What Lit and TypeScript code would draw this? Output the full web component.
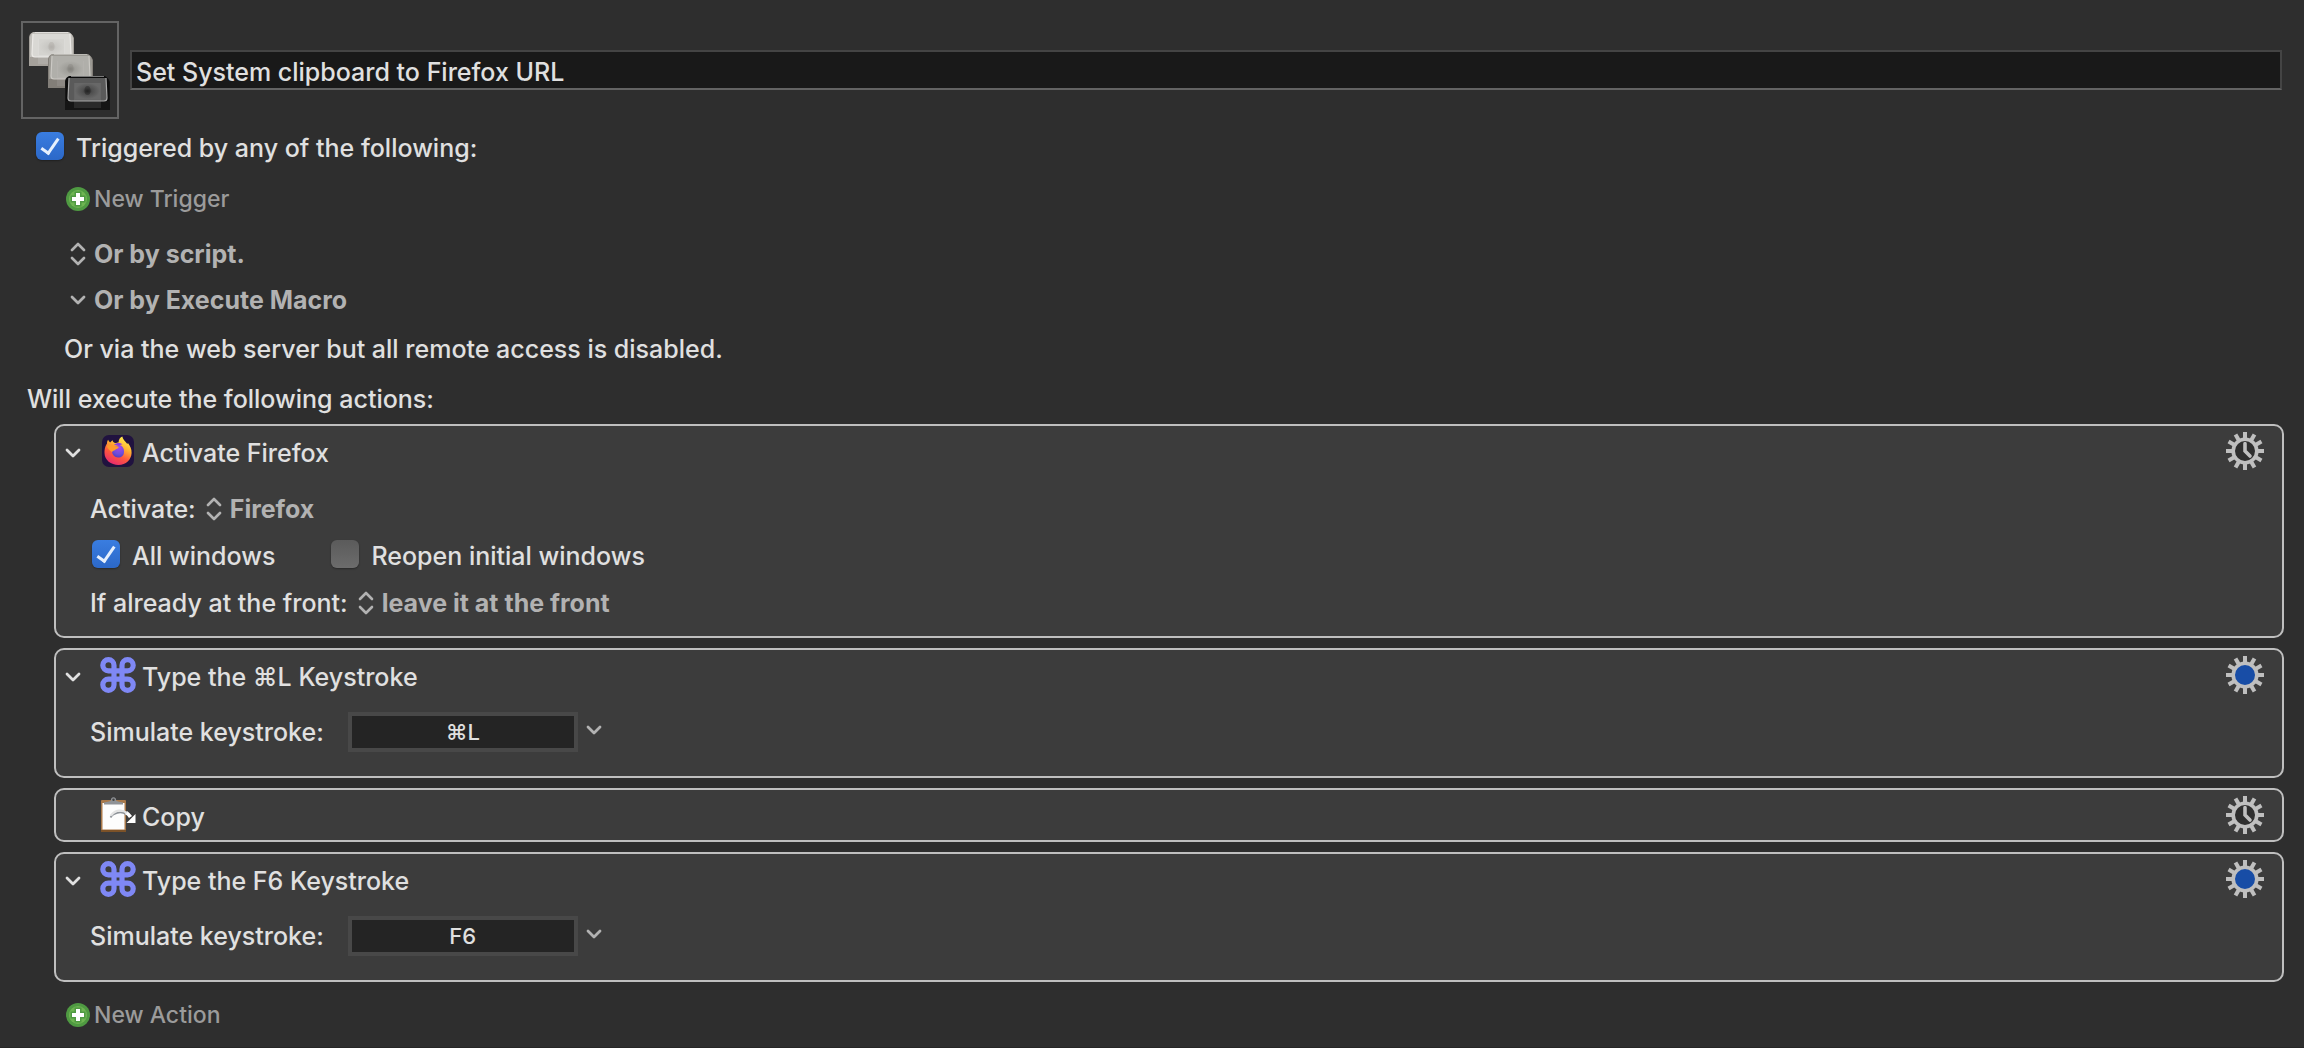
import { LitElement, html, css, svg, nothing, TemplateResult } from "lit";
import { customElement, property } from "lit/decorators.js";

const base = css`
  :host { display: block; box-sizing: border-box; }
  *, *::before, *::after { box-sizing: border-box; }
  svg { display: block; flex: none; }
  button, input, select {
    font: inherit; color: inherit; background: none; border: 0; margin: 0; padding: 0; outline-offset: 2px;
  }
  .row { display: flex; align-items: center; height: 32px; white-space: nowrap; }
  .popup { display: flex; align-items: center; gap: 8px; height: 32px; color: #b2b2b2; font-size: 25px; font-weight: 700; }
  .popup select { appearance: none; line-height: 32px; font-weight: 700; }
  .check {
    appearance: none; flex: none; width: 28px; height: 28px; margin-bottom: 4px; border-radius: 6px;
    background: linear-gradient(#5b5b5b, #6c6c6c); box-shadow: 0 1px 2px #0005;
    display: grid; place-items: center;
  }
  .check:checked { background: linear-gradient(#3a7de0, #2c68c8); }
  .check:checked::before {
    content: ""; width: 10px; height: 19px; margin-bottom: 4px;
    border: solid #e6f0fd; border-width: 0 3px 3px 0; transform: rotate(35deg);
  }
  .add { display: flex; align-items: center; gap: 4px; height: 32px; font-size: 23px; color: #9b9b9b; }
`;

const upDown = svg`<svg width="16" height="24" viewBox="0 0 16 24" fill="none" stroke="currentColor" stroke-width="2.6" stroke-linecap="round" stroke-linejoin="round" aria-hidden="true"><path d="M2 8l6-6 6 6M2 16l6 6 6-6"/></svg>`;
const down = svg`<svg width="16" height="12" viewBox="0 0 16 12" fill="none" stroke="currentColor" stroke-width="2.8" stroke-linecap="round" stroke-linejoin="round" aria-hidden="true"><path d="M2 3l6 6 6-6"/></svg>`;

const plus = svg`<svg width="24" height="24" viewBox="0 0 24 24" aria-hidden="true">
  <circle cx="12" cy="12" r="12" fill="#4f9a42"/>
  <circle cx="12" cy="12" r="9" fill="#6fb552"/>
  <path d="M8.500 4.500h7v4h4v7h-4v4h-7v-4h-4v-7h4z" fill="#4f9a42"/>
  <path d="M10 6h4v4h4v4h-4v4h-4v-4H6v-4h4z" fill="#fff"/>
</svg>`;

const gear = (kind: string) => svg`<svg width="38" height="38" viewBox="-19 -19 38 38" aria-hidden="true">
  ${Array.from({ length: 12 }, (_, i) => svg`<rect x="-2" y="-19" width="4" height="8" fill="#bfbfbf" transform="rotate(${i * 30})"/>`)}
  <circle r="11.800" fill=${kind === "blue" ? "#184da6" : "#2e2e2e"} stroke="#bfbfbf" stroke-width="3.600"/>
  ${kind === "blue" ? nothing : svg`<path d="M0-7.500V0l5 5" fill="none" stroke="#bfbfbf" stroke-width="3.600" stroke-linecap="round"/>`}
</svg>`;

const firefox = svg`<svg width="36" height="36" viewBox="0 0 36 36" aria-hidden="true">
  <defs>
    <linearGradient id="flame" x1=".8" y1=".05" x2=".35" y2="1"><stop offset="0" stop-color="#fff04f"/><stop offset=".35" stop-color="#ffb331"/><stop offset=".65" stop-color="#ff5a3c"/><stop offset="1" stop-color="#e82a6e"/></linearGradient>
    <radialGradient id="globe" cx=".6" cy=".2" r=".9"><stop offset="0" stop-color="#a847ea"/><stop offset=".6" stop-color="#6c4ddb"/><stop offset="1" stop-color="#4b3ab5"/></radialGradient>
  </defs>
  <rect x="2" y="2" width="32" height="32" rx="7" fill="#20123f"/>
  <path d="M4.500 20c0-5 1.200-7.500 2.500-9.500 0-1.500.3-2.700 1.200-3.700.3 1.300 1 2 1.900 2.600 1.200-.8 1.400-1.600 2.500-2.200.2 1.400 1 2.200 2.400 2.900 1.500-.5 2.500-.7 3.500-.7 0-3 2-5.400 3.800-6 .3 2.800 3.500 5.200 5 7.700.4-.3.500-.8.500-1.300 2.500 3.500 4 6.700 3.800 10.200C31.300 26.500 26 32 18.500 32S4.500 27 4.500 20z" fill="url(#flame)"/>
  <path d="M12 18c1-2.500 3-5 6-6 3.500-.8 6 2.500 6 6.500s-2.500 6-6 6-6-3-6-6.500z" fill="url(#globe)"/>
  <path d="M14 12c2.500-2.500 6-2.600 8.500-.5-1.500 0-2.200.3-3 1z" fill="#8a3ee0"/>
  <path d="M7 13c2.500-2 5.500-1.500 7 0 2 .2 4 .4 4.800 1-.3 1.500-2.800 2-3.800 3-1 .6-2 .8-3 2-1.500-1-4.500-3-5-6z" fill="#ff9a2c"/>
</svg>`;

const command = svg`<svg width="36" height="36" viewBox="0 0 36 36" fill="none" stroke="#7f88f5" stroke-width="5.200" aria-hidden="true">
  <path d="M14 13.800H8.400a5.600 5.600 0 1 1 5.600-5.600V27.800A5.600 5.600 0 1 1 8.400 22.200H27.600a5.600 5.600 0 1 1-5.600 5.600V8.200A5.600 5.600 0 1 1 27.600 13.800z"/>
</svg>`;

const clipboard = svg`<svg width="36" height="36" viewBox="0 0 36 36" aria-hidden="true">
  <rect x="1" y="3" width="25" height="32" rx="1" fill="#a9794a"/>
  <path d="M1 33h25v2H1z" fill="#7c5228"/>
  <path d="M2.500 6h22v26.500h-22z" fill="#fdfdfd"/>
  <path d="M4 7.500V5.500L9 4.500l2-1a2.600 2.600 0 1 1 5 0l2 1 5 1v2z" fill="#8f9296"/>
  <circle cx="13.500" cy="2.800" r="1.200" fill="#444"/>
  <path d="M10.500 20.500c2.500-4.500 10.500-7 16-3" fill="none" stroke="#8e9399" stroke-width="1.800"/>
  <path d="M26 15.500q3 2 4.500 4.500" fill="none" stroke="#fff" stroke-width="3.600"/>
  <path d="M11 18.500c4-5.500 11-6.500 16-2.500" fill="none" stroke="#e4e4e4" stroke-width="2.200"/>
  <path d="M35.500 17v9h-9z" fill="#fff"/>
</svg>`;

const macroIcon = svg`<svg width="94" height="94" viewBox="0 0 94 94" aria-hidden="true">
  <defs>
    <radialGradient id="k1"><stop offset="0" stop-color="#b9b8b4"/><stop offset=".4" stop-color="#cac9c5"/><stop offset="1" stop-color="#d4d3cf"/></radialGradient>
    <radialGradient id="k2"><stop offset="0" stop-color="#84837f"/><stop offset=".4" stop-color="#a09f9a"/><stop offset="1" stop-color="#b0afaa"/></radialGradient>
    <radialGradient id="k3"><stop offset="0" stop-color="#2c2c2c"/><stop offset=".4" stop-color="#505050"/><stop offset="1" stop-color="#686868"/></radialGradient>
  </defs>
  ${[
    { x: 6, y: 8, side: "#a5a19b", edge: "#c3c1bc", rim: "#eceae7", face: "#d9d8d4", g: "url(#k1)" },
    { x: 25, y: 30, side: "#827e78", edge: "#9b9993", rim: "#cbc9c4", face: "#b0afaa", g: "url(#k2)" },
    { x: 42, y: 52, side: "#151515", edge: "#0c0c0c", rim: "#a8a8a8", face: "#5a5a5a", g: "url(#k3)" },
  ].map(k => svg`<g transform="translate(${k.x} ${k.y})">
    <path d="M0 35V6Q1 1 6 1H39Q43 2 45 7V35z" fill=${k.side}/>
    <path d="M1 26V6Q2 1 6 1H39Q43 2 44 7V26z" fill=${k.edge}/>
    <path d="M4 3H41L42 23Q42 26 39 26H6Q3 26 3 23z" fill=${k.face}/>
    <path d="M4 3L3 23Q3 26 6 26H39Q42 26 42 23L41 3" fill="none" stroke=${k.rim} stroke-width="1.200"/>
    <path d="M6 1.500H39" stroke=${k.rim} stroke-width="1" opacity=".7"/>
    <rect x="9" y="8" width="27" height="25" fill=${k.rim} opacity=".14"/>
    <rect x="10" y="8" width="25" height="16" fill=${k.g}/>
    <ellipse cx="22.500" cy="15.500" rx="3" ry="4.500" fill=${k.side} opacity=".35"/>
  </g>`)}
</svg>`;

@customElement("action-card")
class ActionCard extends LitElement {
  @property() heading = "";
  @property({ attribute: false }) icon: TemplateResult | typeof nothing = nothing;
  @property() gear = "clock";
  @property({ type: Boolean }) collapsible = false;

  static styles = [base, css`
    .card { border: 2px solid #bfbfbf; border-radius: 10px; background: #3c3c3c; }
    .head { display: flex; align-items: center; height: 50px; padding: 0 18px 0 9px; }
    .toggle { display: grid; place-items: center; width: 16px; height: 32px; margin-top: 3px; }
    .icon { margin: 0 6px 0 19px; }
    .spacer { width: 16px; }
    .title { flex: 1; margin: 3px 0 0; font-size: inherit; font-weight: inherit; line-height: 32px; }
  `];

  render() {
    return html`<section class="card">
      <header class="head">
        ${this.collapsible ? html`<button class="toggle" aria-label="Collapse ${this.heading}">${down}</button>` : html`<span class="spacer"></span>`}
        <span class="icon">${this.icon}</span>
        <h2 class="title">${this.heading}</h2>
        <button aria-label="Options for ${this.heading}">${gear(this.gear)}</button>
      </header>
      <slot></slot>
    </section>`;
  }
}

@customElement("app-root")
class AppRoot extends LitElement {
  static styles = [base, css`
    :host {
      min-height: 100vh; background: #2e2e2e; color: #e0e0e0; border-bottom: 1px solid #262626;
      font-family: Inter, "Liberation Sans", sans-serif; font-size: 25px; font-weight: 500; line-height: 32px;
    }
    .top { display: flex; align-items: center; gap: 11px; padding: 21px 22px 0 21px; }
    .well { flex: none; width: 98px; height: 98px; border: 2px solid #646464; }
    .name {
      flex: 1; min-width: 0; height: 40px; padding: 4px 4px 0; background: #191919;
      border: 2px solid #444; border-bottom-color: #636363;
    }
    .enabled { gap: 12px; padding-left: 36px; margin-top: 13px; }
    .triggers { display: flex; flex-direction: column; align-items: flex-start; padding-left: 66px; margin-top: 19px; }
    .script { margin-top: 23px; padding-left: 4px; }
    .macro { margin-top: 14px; padding-left: 4px; }
    .note { margin: 17px 0 0; padding-left: 64px; }
    .will { margin: 18px 0 0; padding-left: 27px; }
    .actions { display: grid; gap: 10px; margin-top: 9px; padding: 0 20px 0 54px; }
    .body { padding: 17px 0 17px 34px; }
    .body .row { gap: 10px; }
    .body .row + .row { margin-top: 15px; }
    .body .checks { gap: 56px; padding-left: 2px; }
    .check-label { display: flex; align-items: center; gap: 12px; }
    .keys { padding: 10px 0 22px 34px; }
    .keys .row { height: 44px; gap: 8px; }
    .keys label { margin-right: 16px; }
    .key {
      width: 230px; height: 40px; border: 4px solid #484848; background: #242424;
      text-align: center; font-size: 22px; line-height: 28px;
    }
    .more { display: grid; place-items: center; height: 32px; margin-bottom: 4px; color: #b2b2b2; }
    .footer { padding: 17px 0 16px 66px; }
  `];

  private popup(text: string, label: string, id = "") {
    return html`<span class="popup">${upDown}<select id=${id || nothing} aria-label=${label}><option>${text}</option></select></span>`;
  }

  private keystroke(id: string, value: string) {
    return html`<div class="keys"><div class="row">
      <label for=${id}>Simulate keystroke:</label>
      <input class="key" id=${id} .value=${value}>
      <button class="more" aria-label="Choose keystroke">${down}</button>
    </div></div>`;
  }

  render() {
    return html`<main>
      <header class="top">
        <button class="well" aria-label="Macro icon">${macroIcon}</button>
        <input class="name" aria-label="Macro name" .value=${"Set System clipboard to Firefox URL"}>
      </header>
      <label class="row enabled"><input class="check" type="checkbox" checked>Triggered by any of the following:</label>
      <div class="triggers">
        <button class="add">${plus}New Trigger</button>
        <div class="script">${this.popup("Or by script.", "Script trigger")}</div>
        <div class="macro"><button class="popup">${down}Or by Execute Macro</button></div>
      </div>
      <p class="row note">Or via the web server but all remote access is disabled.</p>
      <p class="row will">Will execute the following actions:</p>
      <div class="actions">
        <action-card heading="Activate Firefox" .icon=${firefox} collapsible>
          <div class="body">
            <div class="row"><label for="target">Activate:</label>${this.popup("Firefox", "Activate", "target")}</div>
            <div class="row checks">
              <label class="check-label"><input class="check" type="checkbox" checked>All windows</label>
              <label class="check-label"><input class="check" type="checkbox">Reopen initial windows</label>
            </div>
            <div class="row"><label for="front">If already at the front:</label>${this.popup("leave it at the front", "If already at the front", "front")}</div>
          </div>
        </action-card>
        <action-card heading="Type the ⌘L Keystroke" .icon=${command} gear="blue" collapsible>${this.keystroke("key-l", "⌘L")}</action-card>
        <action-card heading="Copy" .icon=${clipboard}></action-card>
        <action-card heading="Type the F6 Keystroke" .icon=${command} gear="blue" collapsible>${this.keystroke("key-f6", "F6")}</action-card>
      </div>
      <div class="footer"><button class="add">${plus}New Action</button></div>
    </main>`;
  }
}
